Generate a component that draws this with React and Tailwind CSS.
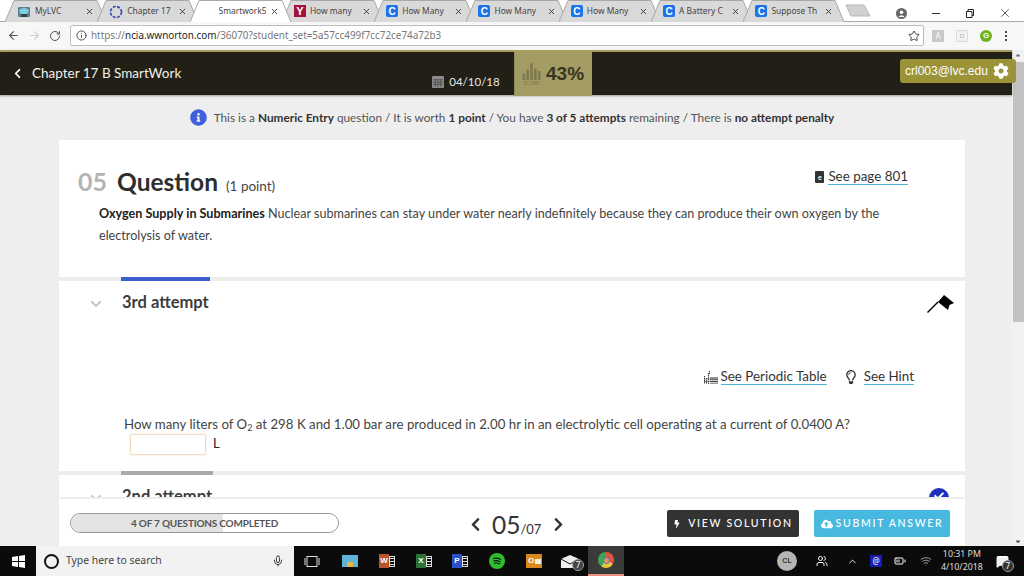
import React from "react";
import { ArrowLeft, ArrowRight, RotateCw, Info, Star, X, Mic, ChevronUp, MessageSquare, Wifi, BatteryMedium, Users } from "lucide-react";
import { FaChevronLeft, FaChevronRight, FaChevronDown, FaCog, FaCloudUploadAlt, FaBolt, FaInfoCircle, FaRegLightbulb, FaCheck, FaSortDown, FaSortUp } from "react-icons/fa";

const C = () => (
  <span className="w-[12px] h-[12px] rounded-[2px] bg-[#1a73e8] flex items-center justify-center text-white text-[10px] font-bold font-['Liberation_Sans',sans-serif] shrink-0">C</span>
);
const Y = () => (
  <span className="w-[12px] h-[12px] bg-[#a3123f] flex items-center justify-center text-white text-[11px] font-bold font-['Liberation_Sans',sans-serif] shrink-0">Y</span>
);
const Ring = () => (
  <svg width="14" height="14" viewBox="0 0 14 14" className="shrink-0"><circle cx="7" cy="7" r="5.5" fill="none" stroke="#3342c8" strokeWidth="1.6" strokeDasharray="3 1.4" /></svg>
);
const Lvc = () => (
  <svg width="14" height="14" viewBox="0 0 14 14" className="shrink-0"><rect x="1" y="2" width="12" height="10" rx="1" fill="#5f7f8c" /><path d="M2 5 Q7 1 12 5 L10 9 Q7 11 4 10Z" fill="#7fd0e0" /><rect x="4" y="9" width="6" height="3" fill="#33454f" /></svg>
);

const tabs = [
  { icon: <Lvc />, t: "MyLVC" },
  { icon: <Ring />, t: "Chapter 17" },
  { t: "Smartwork5", active: true },
  { icon: <Y />, t: "How many" },
  { icon: <C />, t: "How Many" },
  { icon: <C />, t: "How Many" },
  { icon: <C />, t: "How Many" },
  { icon: <C />, t: "A Battery C" },
  { icon: <C />, t: "Suppose Th" },
];

function Tab({ icon, t, active }) {
  return (
    <div className={`relative w-[92.3px] h-[21px] shrink-0 flex items-center pl-[9px] pr-[6px] pt-[2px] ${active ? "z-10" : ""}`}>
      <svg className="absolute left-[-3px] top-0" width="102" height="22" viewBox="0 0 102 22">
        <path d="M0 22 L9 0.5 H92 L101 22" fill={active ? "#ffffff" : "#d9d9d9"} stroke="#a8a8a8" strokeWidth="1" />
      </svg>
      <div className={`relative flex items-center gap-[4px] min-w-0 flex-1 ${active ? "pl-[17px]" : ""}`}>
        {icon}
        <span className="flex-1 overflow-hidden whitespace-nowrap text-[8.4px] text-[#444] font-['Noto_Sans',sans-serif]">{t}</span>
        <X size={9} strokeWidth={2.4} className="text-[#333] shrink-0" />
      </div>
    </div>
  );
}

function Chrome() {
  return (
    <div className="shrink-0 bg-white">
      <div className="h-[21px] pl-[8px] flex items-end bg-white relative border-b border-[#a8a8a8] box-content">
        {tabs.map((x, i) => <Tab key={i} {...x} />)}
        <svg width="26" height="13" viewBox="0 0 26 13" className="ml-[6px] mb-[4px] shrink-0"><path d="M1 1 H19 L25 12 H6Z" fill="#d0d0d0" stroke="#b5b5b5" /></svg>
        <div className="flex-1 flex items-center justify-end pb-[1px] text-[#555]">
          <svg width="11" height="11" viewBox="0 0 11 11" className="mr-[25px]"><circle cx="5.5" cy="5.5" r="5.5" fill="#666" /><circle cx="5.5" cy="4.2" r="1.8" fill="#fff" /><path d="M2.2 9 Q5.5 5.5 8.8 9Z" fill="#fff" /></svg>
          <span className="w-[8px] h-[1px] bg-[#333] mr-[26px]"></span>
          <svg width="8" height="9" viewBox="0 0 8 9" className="mr-[24px]"><path d="M2 2V0.5H7.5V6.5H6M0.5 2.5H6V8.5H0.5Z" fill="none" stroke="#222" /></svg>
          <X size={14} strokeWidth={1.2} className="mr-[12px] text-[#222]" />
        </div>
      </div>
      <div className="h-[28px] flex items-center pl-[7px] pb-[1px] bg-[#f7f7f7]">
        <ArrowLeft size={13} className="text-[#555]" />
        <ArrowRight size={13} className="text-[#ccc] ml-[8px]" />
        <RotateCw size={12} className="text-[#555] ml-[8px]" />
        <div className="ml-[9px] w-[854px] h-[21px] bg-white border border-[#bdbdbd] rounded-[2px] flex items-center pl-[5px] pr-[3px]">
          <Info size={11} className="text-[#444]" />
          <span className="ml-[4px] text-[9.9px] text-[#777] font-['Noto_Sans',sans-serif] flex-1 whitespace-nowrap">https://<span className="text-[#222]">ncia.wwnorton.com</span>/36070?student_set=5a57cc499f7cc72ce74a72b3</span>
          <Star size={12} className="text-[#444]" />
        </div>
        <span className="ml-[8px] w-[12px] h-[12px] bg-[#c8c8c8] flex items-center justify-center text-white text-[8px]">A</span>
        <span className="ml-[12px] w-[12px] h-[12px] border border-[#ddd] bg-[#f1f1f1] flex items-center justify-center"><span className="w-[4px] h-[4px] border border-[#ccc]"></span></span>
        <span className="ml-[12px] w-[12px] h-[12px] rounded-full bg-[#6db31f] flex items-center justify-center text-white text-[8px] font-bold font-['Liberation_Sans',sans-serif]">G</span>
        <span className="ml-[13px] flex flex-col gap-[2px]">
          <span className="w-[2px] h-[2px] bg-[#444]"></span><span className="w-[2px] h-[2px] bg-[#444]"></span><span className="w-[2px] h-[2px] bg-[#444]"></span>
        </span>
      </div>
    </div>
  );
}

const Link = ({ children }) => (
  <span className="border-b-[1.5px] border-[#4fb3d4] leading-[15px] text-[#333]">{children}</span>
);

function Bars({ cls, w = 14, h = 14 }) {
  return (
    <svg width={w} height={h} viewBox="0 0 14 14" className={cls}>
      <g fill="currentColor"><rect x="0" y="9" width="2" height="5" /><rect x="3" y="6" width="2" height="8" /><rect x="6" y="1" width="2" height="13" /><rect x="9" y="5" width="2" height="9" /><rect x="12" y="7" width="2" height="7" /></g>
    </svg>
  );
}

function Periodic() {
  return (
    <svg width="14" height="13" viewBox="0 0 14 13" className="text-[#444]">
      <path d="M0.5 5V13M2.5 7V13M4.5 2V13M5.5 0V3M7 6V13M9 6V13M11 6V13M13 6V13M0 8H14M0 10.5H14" stroke="currentColor" strokeWidth="1.1" strokeDasharray="1.4 0.5" fill="none" />
    </svg>
  );
}

function OfficeIcon({ l, c, m }) {
  return (
    <span style={{ marginLeft: m }} className="w-[16px] h-[14px] flex items-center font-['Liberation_Sans',sans-serif]">
      <span style={{ background: c }} className="w-[10px] h-[14px] text-[8px] font-bold flex items-center justify-center">{l}</span>
      <span className="w-[6px] h-[11px] flex flex-col justify-between py-[1px] bg-[#0c0b0b] border border-[#ddd]">
        <span className="h-[1px] bg-[#ddd]"></span><span className="h-[1px] bg-[#ddd]"></span><span className="h-[1px] bg-[#ddd]"></span>
      </span>
    </span>
  );
}

function Main() {
  return (
    <div className="flex-1 min-h-0 flex font-['Lato',sans-serif] relative">
      <div className="flex-1 min-w-0 flex flex-col bg-[#eeeeee]">
        <div className="shrink-0 h-[45px] relative bg-[#221f16] border-t-[2px] border-[#a89f5f] shadow-[0_1px_2px_rgba(0,0,0,0.35)] flex items-center pl-[12px] z-10">
          <FaChevronLeft size={11} className="text-white" />
          <span className="ml-[9px] text-[13.5px] text-[#f2f0e6]">Chapter 17 B SmartWork</span>
          <div className="ml-[251px] flex items-center h-full pt-[16px]">
            <svg width="12" height="12" viewBox="0 0 13 13"><rect width="13" height="13" rx="1" fill="#8a8a8a" /><path d="M1 4H12M1 6.5H12M1 9H12M3.5 4V12M6.5 4V12M9.5 4V12" stroke="#333" strokeWidth="0.6" /></svg>
            <span className="ml-[5px] text-[11.5px] text-[#e6e6e6]">04/10/18</span>
          </div>
          <div className="absolute left-[514px] top-0 h-[44px] w-[78px] bg-[#a39c64] border-l-[1px] border-[#8f8a5a] flex items-center pl-[7px] gap-[5px]">
            <div className="flex flex-col items-center text-[#7f7a4e]">
              <Bars w={19} h={18} />
              <span className="text-[5px] leading-[6px]">SCORE</span>
            </div>
            <span className="text-[19px] font-bold text-[#38341f] font-['Liberation_Sans',sans-serif]">43%</span>
          </div>
        </div>
        <div className="flex-1 min-h-0 overflow-hidden pl-[59px] pr-[47px]">
          <div className="h-[45px] flex items-center justify-center text-[11.8px] text-[#555]">
            <FaInfoCircle size={17} className="mr-[7px] text-[#3f5fdf]" />
            <span>This is a <b className="text-[#333]">Numeric Entry</b> question / It is worth <b className="text-[#333]">1 point</b> / You have <b className="text-[#333]">3 of 5 attempts</b> remaining / There is <b className="text-[#333]">no attempt penalty</b></span>
          </div>
          <div className="bg-white h-[137px] pt-[25px] pl-[19px] pr-[57px]">
            <div className="flex items-baseline h-[32px]">
              <span className="text-[25px] font-bold text-[#b3b3b3] leading-[32px]">05</span>
              <span className="ml-[10px] text-[24.5px] font-bold text-[#2e2e2e] leading-[32px]">Question</span>
              <span className="ml-[8px] text-[13.5px] text-[#444]">(1 point)</span>
              <span className="ml-auto self-start mt-[4px] flex items-center gap-[4px] text-[13.4px]">
                <span className="w-[9px] h-[12px] rounded-[1px] bg-[#333] flex items-center justify-center text-white text-[7px] font-bold">e</span>
                <Link>See page 801</Link>
              </span>
            </div>
            <p className="mt-[6px] ml-[21px] text-[12.6px] leading-[22px] text-[#444]"><b className="text-[#222]">Oxygen Supply in Submarines</b> Nuclear submarines can stay under water nearly indefinitely because they can produce their own oxygen by the electrolysis of water.</p>
          </div>
          <div className="h-[4px] bg-[#eeeeee] relative"><div className="absolute left-[62px] top-0 w-[89px] h-[4px] bg-[#3f5fd0]"></div></div>
          <div className="bg-white h-[190px] relative pl-[63px] pr-[51px]">
            <FaChevronDown size={12} className="absolute left-[31px] top-[17px] text-[#c4c4c4]" />
            <div className="pt-[10px] text-[16.5px] font-bold text-[#3c3c3c] leading-[22px]">3rd attempt</div>
            <svg width="28" height="18" viewBox="0 0 28 18" className="absolute right-[10px] top-[14px]"><path d="M0.5 17.5 L11 7" stroke="#000" strokeWidth="1.4" /><path d="M17 0 L27 8 L22.5 10 L21 15 L11 7Z" fill="#000" /></svg>
            <div className="mt-[56px] flex justify-end items-center text-[13.4px] gap-[3px]">
              <Periodic />
              <Link>See Periodic Table</Link>
              <FaRegLightbulb size={14} className="ml-[14px] mr-[3px] text-[#333]" />
              <Link>See Hint</Link>
            </div>
            <div className="mt-[29px] pl-[2px] text-[13.25px] text-[#444] leading-[20px] whitespace-nowrap">How many liters of O<sub className="text-[9px] leading-none">2</sub> at 298 K and 1.00 bar are produced in 2.00 hr in an electrolytic cell operating at a current of 0.0400 A?</div>
            <div className="ml-[8px] flex items-center h-[22px] mt-[-1px]">
              <span className="block w-[76px] h-[21px] border border-[#f2dcc6] rounded-[2px] shadow-[0_0_2px_#f5d9bd]"></span>
              <span className="ml-[7px] text-[13px] text-[#222]">L</span>
            </div>
          </div>
          <div className="h-[4px] bg-[#eeeeee] relative"><div className="absolute left-[62px] top-0 w-[92px] h-[4px] bg-[#aaaaaa]"></div></div>
          <div className="bg-white h-[22px] relative pl-[63px] overflow-hidden">
            <FaChevronDown size={12} className="absolute left-[31px] top-[17px] text-[#c4c4c4]" />
            <div className="pt-[10px] text-[16.5px] font-bold text-[#3c3c3c] leading-[22px]">2nd attempt</div>
            <div className="absolute right-[16px] top-[13px] w-[20px] h-[20px] rounded-full bg-[#1f2fc0] flex justify-center pt-[3px]"><FaCheck size={10} className="text-white" /></div>
          </div>
        </div>
        <div className="ml-[59px] mr-[47px] h-[49px] shrink-0 bg-white border-t-[2px] border-[#eeeeee] flex items-center pl-[11px] pr-[15px] pt-[1px] z-10">
          <div className="relative w-[269px] h-[20px] rounded-full border border-[#999] overflow-hidden flex items-center justify-center">
            <div className="absolute left-0 top-0 h-full w-[57%] bg-[#e4e4e4]"></div>
            <span className="relative text-[10px] font-bold tracking-[-0.2px] text-[#555]">4 OF 7 QUESTIONS COMPLETED</span>
          </div>
          <FaChevronLeft size={15} className="ml-[129px] text-[#333] mt-[2px]" />
          <span className="ml-[9px] mt-[4px] text-[24.5px] text-[#333] leading-none">05<span className="text-[13px]">/07</span></span>
          <FaChevronRight size={15} className="ml-[10px] text-[#333] mt-[2px]" />
          <div className="ml-auto mt-[1px] w-[132px] h-[27px] bg-[#333333] rounded-[2px] flex items-center justify-center gap-[7px] text-white text-[10.5px] tracking-[1.7px] font-medium"><FaBolt size={8} />VIEW SOLUTION</div>
          <div className="ml-[15px] mt-[1px] w-[136px] h-[27px] bg-[#47b8e0] rounded-[2px] flex items-center justify-center gap-[3px] text-white text-[10.5px] tracking-[1.7px] font-medium"><FaCloudUploadAlt size={12} />SUBMIT ANSWER</div>
        </div>
      </div>
      <div className="w-[12px] shrink-0 bg-[#f1f1f1] flex flex-col items-center justify-between pt-[3px] pb-[2px]">
        <FaSortUp size={8} className="text-[#777] h-[8px]" />
        <div className="w-[11px] h-[260px] bg-[#c1c1c1] mt-[1px] mb-auto"></div>
        <FaSortDown size={8} className="text-[#555] h-[8px]" />
      </div>
      <div className="absolute right-[8px] top-[9px] z-20 w-[116px] h-[24px] rounded-[3px] bg-[#9a9338] flex items-center pl-[5px] gap-[5px] text-white text-[12px] font-['Liberation_Sans',sans-serif]">
        crl003@lvc.edu
        <FaCog size={16} className="text-white" />
      </div>
    </div>
  );
}

function Taskbar() {
  return (
    <div className="h-[30px] shrink-0 bg-[#0c0b0b] flex items-center text-white relative">
      <div className="w-[36px] flex justify-center">
        <svg width="13" height="13" viewBox="0 0 13 13"><path d="M0 2 L6 1 V6 H0Z M7 1 L13 0 V6 H7Z M0 7 H6 V12 L0 11Z M7 7 H13 V13 L7 12Z" fill="#fff" /></svg>
      </div>
      <div className="w-[258px] h-full bg-[#f2f2f2] flex items-center pl-[8px] text-[#444]">
        <span className="w-[15px] h-[15px] rounded-full border-[2.5px] border-[#111]"></span>
        <span className="ml-[7px] text-[10.4px] font-['Noto_Sans',sans-serif]">Type here to search</span>
        <Mic size={12} className="ml-auto mr-[10px]" />
      </div>
      <svg width="16" height="11" viewBox="0 0 16 11" className="ml-[10px]"><rect x="3" y="0.5" width="10" height="10" fill="none" stroke="#ddd" /><path d="M1 2V9M15 2V9" stroke="#ddd" /></svg>
      <svg width="16" height="14" viewBox="0 0 16 14" className="ml-[22px]"><rect y="1" width="16" height="12" fill="#5fb5d8" /><rect x="5" y="8" width="6" height="5" fill="#e8b93c" /></svg>
      <OfficeIcon l="W" c="#b7562a" m={21} />
      <OfficeIcon l="X" c="#2e7237" m={21} />
      <OfficeIcon l="P" c="#2b52c9" m={20} />
      <span className="ml-[21px] w-[16px] h-[16px] rounded-full bg-[#2ebd2e] flex items-center justify-center">
        <svg width="10" height="8" viewBox="0 0 10 8"><path d="M1 1.5 Q5 0.5 9 2.5M1.5 4 Q5 3 8.5 5M2 6.2 Q5 5.5 8 7" stroke="#111" fill="none" strokeWidth="1.1" /></svg>
      </span>
      <span className="ml-[21px] w-[16px] h-[14px] bg-[#d98a1f] text-[8px] font-bold flex items-center pl-[2px] gap-[1px] font-['Liberation_Sans',sans-serif]">O<span className="w-[6px] h-[5px] bg-[#f5f0e0]"></span></span>
      <div className="relative ml-[19px] w-[18px] flex items-center">
        <svg width="18" height="13" viewBox="0 0 18 13"><path d="M0 4 L9 0 L18 4 V13 H0Z" fill="#eee" /><path d="M0 4 L9 9 L18 4" stroke="#111" fill="none" /></svg>
        <span className="absolute left-[11px] top-[4px] w-[12px] h-[12px] rounded-full bg-[#444] border border-[#999] text-[8px] flex items-center justify-center">7</span>
      </div>
      <div className="ml-[9px] w-[36px] h-full bg-[#3a3a3a] border-b-[2px] border-[#e88f7f] flex items-center justify-center">
        <span className="w-[16px] h-[16px] rounded-full bg-[conic-gradient(#e0553f_0_33%,#e9c43c_33%_60%,#3aa757_60%_100%)] flex items-center justify-center"><span className="w-[7px] h-[7px] rounded-full bg-[#e9935e] border border-[#3b78e7]"></span></span>
      </div>
      <span className="ml-[153px] w-[20px] h-[20px] rounded-full bg-[#b5b5b5] text-[#333] text-[7px] font-bold flex items-center justify-center font-['Liberation_Sans',sans-serif]">CL</span>
      <Users size={12} className="ml-[19px]" />
      <ChevronUp size={11} className="ml-[19px]" />
      <span className="ml-[12px] w-[12px] h-[12px] bg-[#1b1bb0] rounded-[1px] flex items-center justify-center text-[8px]">@</span>
      <BatteryMedium size={12} className="ml-[12px]" />
      <Wifi size={12} className="ml-[14px] text-[#999]" />
      <div className="ml-[9px] flex flex-col items-center text-[8.8px] leading-[13px] font-['Noto_Sans',sans-serif] text-[#ddd]">
        <span>10:31 PM</span><span>4/10/2018</span>
      </div>
      <div className="relative ml-[13px]">
        <MessageSquare size={13} fill="#eee" />
        <span className="absolute left-[6px] top-[5px] w-[12px] h-[12px] rounded-full bg-[#333] border border-[#999] text-[8px] flex items-center justify-center">7</span>
      </div>
    </div>
  );
}

export default function App() {
  return (
    <div className="w-[1024px] h-[576px] overflow-hidden flex flex-col bg-white">
      <Chrome />
      <Main />
      <Taskbar />
    </div>
  );
}
